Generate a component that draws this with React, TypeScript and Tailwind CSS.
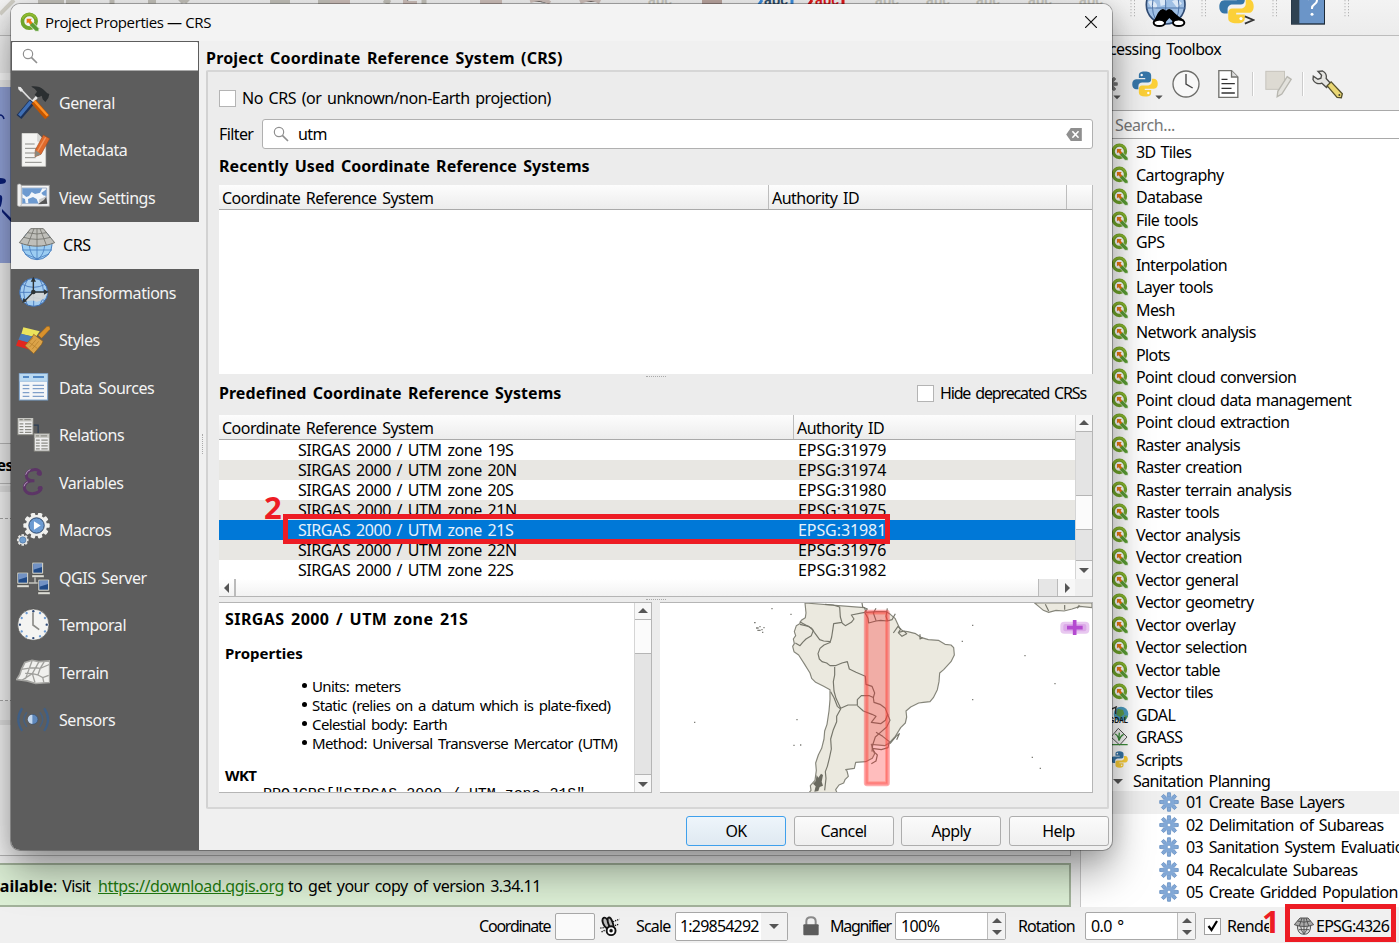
import React from "react";

const QIcon = ({ className = "" }: { className?: string }) => (
  <svg viewBox="0 0 54 54" className={className}>
    <circle cx="25" cy="25" r="18.5" fill="none" stroke="#6fa52a" strokeWidth="10" />
    <path d="M7 19a19 19 0 0 1 36 0" fill="none" stroke="#8fb82e" strokeWidth="5" />
    <path d="M27 29l8-1 16 16v8h-9L26 36z" fill="#5a9c33" stroke="#f4f7ee" strokeWidth="2" />
    <path d="M18 18h14l-3 5 5 6-6 5-6-6-4 3z" fill="#ee7913" />
  </svg>
);

const Python = ({ className = "" }: { className?: string }) => (
  <svg viewBox="0 0 110 110" className={className}>
    <path d="M54 2c-20 0-25 7-25 16v12h27v5H17C6 35 1 44 1 56s6 21 15 21h11V64c0-9 7-15 16-15h25c8 0 13-6 13-13V18C81 8 72 2 54 2z" fill="#3776a8" />
    <path d="M56 108c20 0 25-7 25-16V80H54v-5h39c11 0 16-9 16-21s-6-21-15-21H84v13c0 9-7 15-16 15H42c-8 0-13 6-13 13v18c0 10 9 16 27 16z" fill="#fcd038" />
    <circle cx="41" cy="17" r="5" fill="#fff" />
    <circle cx="69" cy="93" r="5" fill="#fff" />
  </svg>
);

const Magnifier = ({ className = "" }: { className?: string }) => (
  <svg viewBox="0 0 48 48" className={className} fill="none" stroke="#8f8f8f">
    <circle cx="18" cy="18" r="14" strokeWidth="3.5" />
    <path d="M28 28l17 17" strokeWidth="5" />
  </svg>
);

const Gear = ({ className = "", color = "#82a8d6", edge = "#5d88be" }: { className?: string; color?: string; edge?: string }) => (
  <svg viewBox="-28 -28 56 56" className={className}>
    {[0, 45, 90, 135, 180, 225, 270, 315].map((a) => (
      <path key={a} transform={`rotate(${a})`} d="M-5-15l1-11h8l1 11z" fill={color} stroke={edge} strokeWidth="2" />
    ))}
    <circle r="15.5" fill={color} />
    <circle r="5" fill="#fff" stroke={edge} strokeWidth="1.5" />
  </svg>
);

const Tri = ({ dir, className = "" }: { dir: "up" | "down" | "left" | "right"; className?: string }) => {
  const d = { up: "M0 7L5 2l5 5z", down: "M0 3l5 5 5-5z", left: "M7 0L2 5l5 5z", right: "M3 0l5 5-5 5z" }[dir];
  return (
    <svg viewBox="0 0 10 10" className={`block h-[10px] w-[10px] shrink-0 ${className}`} fill="#555">
      <path d={d} />
    </svg>
  );
};

const Monitor = ({ x, y }: { x: number; y: number }) => (
  <g transform={`translate(${x} ${y})`}>
    <rect width="34" height="35" rx="3" fill="#d9d9d2" stroke="#44443f" strokeWidth="1.5" />
    <rect x="4" y="4" width="26" height="27" fill="#204a87" />
    <path d="M4 4h26v10L4 22z" fill="#7292c4" />
    <rect x="0" y="38" width="36" height="7" fill="#dcdcd5" stroke="#55554f" />
  </g>
);

const Sheet = ({ x, y }: { x: number; y: number }) => (
  <g transform={`translate(${x} ${y})`}>
    <rect width="47" height="54" fill="#eee" stroke="#8d8d86" strokeWidth="3" />
    <rect x="1" y="1" width="45" height="12" fill="#c8c8c3" />
    <path d="M5 7h10M20 7h20M5 20h12M5 29h12M5 38h12M5 47h12M22 20h20M22 29h20M22 38h20M22 47h20" stroke="#8c8c85" strokeWidth="4" />
  </g>
);

const ICON = "block h-[34px] w-[34px] shrink-0";

const icons: Record<string, React.ReactNode> = {
  General: (
    <svg viewBox="48 257 102 102" className={ICON}>
      <path d="M60 264l36 38" stroke="#ddd" strokeWidth="5" />
      <path d="M54 259l8 1 7 9-6 6-8-8z" fill="#e8e8e8" />
      <path d="M97 303L57 350" stroke="#1c3158" strokeWidth="19" strokeLinecap="butt" />
      <path d="M93 304L58 346" stroke="#3f6fb5" strokeWidth="10" />
      <path d="M113 287l-15 17" stroke="#e6e6e6" strokeWidth="8" />
      <path d="M95 258c16-1 28 2 36 10l11 11 6 2-3 12-9 12-8-8-3-11-12 6-9-9 7-9c-4-7-8-10-16-14z" fill="#2b2f31" />
      <path d="M101 304l41 47" stroke="#c35500" strokeWidth="17" />
      <path d="M103 302l40 44" stroke="#ff9227" strokeWidth="7" />
    </svg>
  ),
  Metadata: (
    <svg viewBox="48 400 102 102" className={ICON}>
      <path d="M66 401h46l25 25v74H66z" fill="#f4f4f2" stroke="#d4d4d0" strokeWidth="2" />
      <path d="M113 401v24h23z" fill="#d8d8d4" stroke="#aaa" />
      <path d="M75 433h29M75 446h40M75 460h30M75 474h32M75 488h50" stroke="#8c8c88" strokeWidth="3" />
      <path d="M130 406l19 11-26 47-18 7 1-20z" fill="#e06a2c" stroke="#a34b1d" strokeWidth="2" />
      <path d="M106 451l17 13-18 7z" fill="#8a8a80" />
      <path d="M137 413l-24 42" stroke="#f0955f" strokeWidth="4" />
    </svg>
  ),
  "View Settings": (
    <svg viewBox="48 542 102 102" className={ICON}>
      <path d="M58 555h90v63H58z" fill="#f5f5f5" stroke="#9a9a9a" strokeWidth="3" />
      <path d="M66 563h74v47H66z" fill="#f2f6fb" stroke="#7e94b5" strokeWidth="2" />
      <path d="M67 564h60l-7 13-15 4-10-6-8 12-8 3-12-10zM67 592l8 4 2 13H67zM85 609l-1-13 15-6 11 6 5 13zM133 571l6-4v20l-10-2-5-7z" fill="#6d9ad0" />
      <path d="M115 612l23-24 4 22z" fill="#555" />
      <path d="M140 588l-8 11-16 10 2-12z" fill="#c9c9c9" />
      <rect x="52" y="551" width="12" height="67" rx="5" fill="#f0f0f0" stroke="#a5a5a5" strokeWidth="2" />
    </svg>
  ),
  CRS: (
    <svg viewBox="54 679 114 114" className="block h-[38px] w-[38px] shrink-0">
      <circle cx="111" cy="735" r="45" fill="#9ccdf2" stroke="#4a80c0" strokeWidth="3" />
      <path d="M66 751h90M88 731c0 22 8 40 23 49 15-9 23-27 23-49M111 730v50M75 763l36 14 36-14" fill="none" stroke="#4a80c0" strokeWidth="2.5" />
      <path d="M92 687h38l34 42c-34 14-72 14-106 0z" fill="#bfbfba" stroke="#73736e" strokeWidth="3" />
      <path d="M102 687l-19 49M120 687l19 49M111 687v52M82 699q29 8 58 0M71 713q40 12 80 0" fill="none" stroke="#73736e" strokeWidth="2.5" />
    </svg>
  ),
  Transformations: (
    <svg viewBox="48 32 102 102" className={ICON}>
      <circle cx="101" cy="81" r="42" fill="#a4cdf0" stroke="#3b6db2" strokeWidth="3" />
      <path d="M59 81h84M67 57q34 18 68 0M67 106q34-18 68 0M101 39v84M83 42q-24 38 0 78M119 42q24 38 0 78" fill="none" stroke="#4274b8" strokeWidth="2.5" />
      <path d="M71 112l28-31h45q-10 26-34 28-20-8-38 3z" fill="#d6d6d3" opacity=".9" />
      <path d="M100 80V44M100 80h40M100 80l-28 29" stroke="#2e3436" strokeWidth="4" />
      <path d="M100 34l-8 15h16zM146 80l-14-8v16zM67 113l3-15 11 10z" fill="#2e3436" />
      <circle cx="100" cy="80" r="7" fill="#2e3436" />
    </svg>
  ),
  Styles: (
    <svg viewBox="48 175 102 102" className={ICON}>
      <path d="M70 188l49 12-12 18-43-10z" fill="#ece35c" />
      <path d="M63 207l44 11-12 19-40-11z" fill="#4d7db8" />
      <path d="M55 225l43 12-8 18-42-12z" fill="#e3261f" />
      <path d="M148 185l3 8-26 28-11-9 27-27z" fill="#d9912c" stroke="#8c5a14" strokeWidth="1.5" />
      <path d="M101 209l28 21-4 9-24 28-26-24 22-26z" fill="#dba349" stroke="#8a5c1a" strokeWidth="2" />
      <path d="M99 219l-17 20M108 225l-19 22M116 230l-20 24M86 232l27 20" stroke="#b27b28" strokeWidth="2" />
    </svg>
  ),
  "Data Sources": (
    <svg viewBox="48 317 102 102" className={ICON}>
      <rect x="58" y="325" width="85" height="79" fill="#f4f6f8" stroke="#7da5cf" strokeWidth="3" />
      <rect x="59" y="326" width="83" height="22" fill="#b9d9f1" />
      <path d="M69 335h18M99 335h33" stroke="#5289c5" strokeWidth="6" />
      <path d="M68 360h20M68 370h20M68 382h20M68 393h20M98 360h34M98 370h34M98 382h34M98 393h34" stroke="#7f9fc9" strokeWidth="3.5" />
      <path d="M59 348h84" stroke="#8bb0d6" strokeWidth="2" />
    </svg>
  ),
  Relations: (
    <svg viewBox="48 460 102 106" className={ICON}>
      <path d="M100 482h15v27" stroke="#2d3f55" strokeWidth="4" fill="none" />
      <Sheet x={52} y={458} />
      <Sheet x={103} y={509} />
    </svg>
  ),
  Variables: (
    <svg viewBox="48 602 102 102" className={ICON}>
      <path d="M121 627c2-11-10-15-20-14-13 1-22 8-22 18s9 16 24 15c-19-1-30 8-30 20 0 14 12 20 26 19 13-1 25-8 24-18" fill="none" stroke="#5c3566" strokeWidth="9" strokeLinecap="round" />
      <circle cx="117" cy="624" r="7" fill="#5c3566" />
      <circle cx="120" cy="669" r="7" fill="#5c3566" />
      <path d="M77 628q3-12 14-15M72 663q2-10 11-13" fill="none" stroke="#b39abb" strokeWidth="3" />
    </svg>
  ),
  Macros: (
    <svg viewBox="48 40 102 106" className={ICON}>
      <g transform="translate(110 79)">
        {[0, 36, 72, 108, 144, 180, 216, 252, 288, 324].map((a) => (
          <rect key={a} x="-7" y="-41" width="14" height="14" rx="3" fill="#f0f0ee" transform={`rotate(${a + 18})`} />
        ))}
        <circle r="33" fill="#f0f0ee" />
        <circle r="24" fill="#6c9bd2" stroke="#2c4568" strokeWidth="3" />
        <path d="M-8-13L13 0l-21 13z" fill="#fff" />
      </g>
      <g transform="translate(67 124)">
        {[0, 45, 90, 135, 180, 225, 270, 315].map((a) => (
          <rect key={a} x="-4" y="-18" width="8" height="8" fill="#e6e6e4" transform={`rotate(${a})`} />
        ))}
        <circle r="14" fill="#e6e6e4" />
        <circle r="10" fill="#729fcf" stroke="#3b5f8c" strokeWidth="1.5" />
      </g>
    </svg>
  ),
  "QGIS Server": (
    <svg viewBox="48 182 102 102" className={ICON}>
      <path d="M105 228v20M86 248h32" stroke="#c4c4bd" strokeWidth="4" />
      <Monitor x={96} y={186} />
      <Monitor x={51} y={216} />
      <Monitor x={114} y={237} />
    </svg>
  ),
  Temporal: (
    <svg viewBox="48 325 104 104" className={ICON}>
      <circle cx="101" cy="376" r="48" fill="#f4f4f2" stroke="#4a4a48" strokeWidth="2" />
      {[0, 30, 60, 90, 120, 150, 180, 210, 240, 270, 300, 330].map((a) => (
        <circle key={a} cx="101" cy="335" r="3.6" fill={a % 90 ? "#6b9ad2" : "#2e4a78"} transform={`rotate(${a} 101 376)`} />
      ))}
      <path d="M100 339v38l19 14" fill="none" stroke="#8a8a86" strokeWidth="5" />
    </svg>
  ),
  Terrain: (
    <svg viewBox="48 467 104 104" className={ICON}>
      <path d="M75 487l22-7 21 4 33-2v66l-43 3-26-8-32-4q12-15 15-32z" fill="#f0f0ee" stroke="#a5a5a2" strokeWidth="5" />
      <path d="M97 482l-8 22-25 4M118 485l-10 18-19 1-12 33M150 493l-28 12-14-2-10 18 8 27M122 505l-7 20-17-4-22-1M115 525l15 8 18-7M130 533l3 15M122 505l12-20M98 521l-32 20" fill="none" stroke="#a0a09d" strokeWidth="4" />
    </svg>
  ),
  Sensors: (
    <svg viewBox="48 610 104 104" className={ICON} fill="none">
      <path d="M67 626q-24 34 0 69M134 626q24 34 0 69" stroke="#3f5f86" strokeWidth="7" />
      <path d="M81 638q-17 22 0 45M121 638q17 22 0 45" stroke="#46607f" strokeWidth="5" />
      <circle cx="100" cy="660" r="15" fill="#5f88bb" stroke="#37506f" strokeWidth="2" />
      <path d="M98 646a14 14 0 0 0 0 28z" fill="#c3d7ee" />
    </svg>
  ),
};

const toolGroups = [
  "3D Tiles", "Cartography", "Database", "File tools", "GPS", "Interpolation", "Layer tools", "Mesh",
  "Network analysis", "Plots", "Point cloud conversion", "Point cloud data management",
  "Point cloud extraction", "Raster analysis", "Raster creation", "Raster terrain analysis", "Raster tools",
  "Vector analysis", "Vector creation", "Vector general", "Vector geometry", "Vector overlay",
  "Vector selection", "Vector table", "Vector tiles",
];

const planning = [
  "01 Create Base Layers", "02 Delimitation of Subareas", "03 Sanitation System Evaluation",
  "04 Recalculate Subareas", "05 Create Gridded Population",
];

const crsRows = [
  ["19S", "31979"], ["20N", "31974"], ["20S", "31980"], ["21N", "31975"], ["21S", "31981"], ["22N", "31976"], ["22S", "31982"],
];

const Handle = ({ className = "" }: { className?: string }) => (
  <svg viewBox="0 0 6 18" className={`h-[18px] w-[6px] shrink-0 ${className}`} stroke="#b5b5b5" strokeDasharray="1.3 1.7">
    <path d="M1 0v18M4.5 0v18" />
  </svg>
);

const MainToolbar = () => (
  <div className="flex h-[36px] shrink-0 items-start overflow-hidden border-b border-[#bcbcbc] bg-gradient-to-b from-[#f3f3f3] to-[#ececec]">
    <svg viewBox="0 0 1120 36" className="h-[36px] w-[1120px] shrink-0">
      <path d="M0 14L14 0" stroke="#d1cfc6" strokeWidth="4" />
      <path d="M38 1h26M66 2h14M112 0v4M148 1h8M180 2q4-4 8 0M270 1h20M384 0l6 3M424 0v5M318 2h18" stroke="#c4c2bb" strokeWidth="5" />
      <path d="M330 2h20M405 0v3h12M480 2h22M530 1q12-4 20 2M580 2q12-5 20 0" stroke="#cfc0bb" strokeWidth="4" />
      <path d="M702 2h20" stroke="#bba6a0" strokeWidth="4" />
      <g fontFamily="Liberation Sans, sans-serif" fontSize="14" fontWeight="700" letterSpacing="0" wordSpacing="0">
        <text x="648" y="5" fill="#c9c8c0">abc</text>
        <text x="764" y="5" fill="#30506e">abc</text>
        <text x="815" y="5" fill="#e2161a">abc</text>
        <text x="875" y="5" fill="#c9c8c0">abc</text>
        <text x="926" y="5" fill="#c9c8c0">abc</text>
        <text x="976" y="5" fill="#c9c8c0">abc</text>
        <text x="1028" y="5" fill="#c9c8c0">abc</text>
        <text x="1079" y="5" fill="#c9c8c0">abc</text>
      </g>
      <path d="M762 0l-4 6M792 0v6" stroke="#3b8ee0" strokeWidth="3" />
      <path d="M812 0l-4 6M843 0v6" stroke="#e2161a" strokeWidth="3" />
    </svg>
    <Handle className="ml-[10px]" />
    <svg viewBox="250 0 132 90" className="ml-[8px] h-[30px] w-[44px] shrink-0">
      <circle cx="315" cy="14" r="58" fill="#9fbfe4" stroke="#2f4a72" strokeWidth="5" />
      <path d="M262 6q14-10 24 4t-10 18zM334 4q16-10 30 6l-14 14zM296-6h24l-6 20-14 4z" fill="#dce8f6" />
      <path d="M258 24h116M315-40V60M285-30q-20 50 0 90M345-30q20 50 0 90" stroke="#4e74a8" strokeWidth="3" fill="none" />
      <path d="M278 66L292 38Q304 20 316 32 328 20 341 38L373 66 340 68 326 54 312 70z" fill="#000" />
      <ellipse cx="296" cy="68" rx="17" ry="10" fill="#fff" stroke="#000" strokeWidth="6" />
      <ellipse cx="354" cy="68" rx="17" ry="10" fill="#fff" stroke="#000" strokeWidth="6" />
      <path d="M282 60q14-14 30-2v10q-14-12-30-2zM338 60q16-14 32 0v6q-16-10-32 0z" fill="#000" />
    </svg>
    <Handle className="ml-[13px]" />
    <div className="relative ml-[12px] h-[30px] w-[44px] shrink-0 overflow-hidden">
      <Python className="absolute -top-[11px] left-0 h-[35px] w-[35px]" />
      <svg viewBox="0 0 30 28" className="absolute left-[25px] top-[15px] h-[10px] w-[11px]">
        <path d="M2 4l24 10L2 24" fill="none" stroke="#333" strokeWidth="5" />
      </svg>
    </div>
    <Handle className="ml-[9px]" />
    <svg viewBox="0 0 102 75" className="ml-[13px] h-[25px] w-[34px] shrink-0">
      <rect x="1" y="-10" width="100" height="82" fill="#6b95c8" stroke="#1d2a38" strokeWidth="4" />
      <rect x="1" y="-10" width="24" height="82" fill="#2f4252" />
      <path d="M50 0q2-14 14-14t14 14q0 8-8 13t-7 14" fill="none" stroke="#fff" strokeWidth="6" />
      <circle cx="63" cy="43" r="4.500" fill="#fff" />
    </svg>
    <Handle className="ml-[19px]" />
  </div>
);

const Toolbox = () => (
  <div className="ml-[9px] flex w-[319px] shrink-0 flex-col bg-[#f0f0f0]">
    <div className="flex h-[26px] w-[141px] justify-end whitespace-nowrap leading-[26px]">Processing Toolbox</div>
    <div className="flex h-[44px] items-center pl-[20px]">
      <Gear className="h-[18px] w-[18px]" color="#777" edge="#666" />
      <Tri dir="down" className="-ml-[6px] mt-[26px] scale-75" />
      <Python className="ml-[10px] h-[26px] w-[26px]" />
      <Tri dir="down" className="-ml-[4px] mt-[26px] scale-75" />
      <svg viewBox="0 0 84 84" className="ml-[8px] h-[28px] w-[28px]" fill="none" stroke="#6d6d6a">
        <circle cx="42" cy="42" r="39" strokeWidth="4" fill="#f8f8f8" />
        <path d="M42 12v30l20 12" strokeWidth="4" stroke="#444" />
      </svg>
      <svg viewBox="0 0 62 84" className="ml-[18px] h-[28px] w-[21px]" fill="#fff" stroke="#71716d" strokeWidth="4">
        <path d="M2 2h38l19 19v61H2z" />
        <path d="M40 2v19h19" fill="#ddd" />
        <path d="M10 28h18M10 41h40M10 55h30M10 69h40" stroke="#333" />
      </svg>
      <div className="ml-[13px] h-[24px] w-[2px] border-l border-[#ccc] bg-white" />
      <svg viewBox="0 0 80 84" className="ml-[11px] h-[28px] w-[27px]">
        <rect x="2" y="4" width="56" height="54" fill="#dddad2" stroke="#c6c4bc" strokeWidth="3" />
        <path d="M66 20l12 8-28 44-14 8 2-16z" fill="#e3e2dd" stroke="#b8b7b0" strokeWidth="4" />
      </svg>
      <div className="ml-[10px] h-[24px] w-[2px] border-l border-[#ccc] bg-white" />
      <svg viewBox="0 0 94 86" className="ml-[8px] h-[29px] w-[31px]">
        <path d="M18 3l14-1c10 5 13 14 11 23l13 14-12 13-14-13C18 43 7 38 3 28l1-10 14 9 9-3 2-9z" fill="#e4e4e1" stroke="#4b4b48" strokeWidth="4" />
        <path d="M46 47l12-12 34 36-3 12-13-1z" fill="#ead774" stroke="#55502c" strokeWidth="4" />
        <circle cx="83" cy="75" r="3" fill="#443" />
      </svg>
    </div>
    <div className="mt-[4px] h-[29px] border-y border-[#a9a9a9] bg-white pl-[35px] leading-[28px] tracking-[-0.4px] text-[#777]">Search...</div>
    <div className="flex flex-1 flex-col overflow-hidden border-l border-[#c8c8c8] bg-white pt-[2px]">
      {toolGroups.map((t) => (
        <div key={t} className="flex h-[22.5px] shrink-0 items-center pl-[30px]">
          <QIcon className="h-[18px] w-[18px]" />
          <span className="ml-[7px] whitespace-nowrap [word-spacing:1.2px]">{t}</span>
        </div>
      ))}
      <div className="flex h-[22.5px] shrink-0 items-center pl-[30px]">
        <svg viewBox="0 0 54 54" className="h-[18px] w-[18px]">
          <circle cx="30" cy="24" r="22" fill="#4a9cc0" />
          <path d="M20 8l16 4 4 12-12 10-12-8zM40 28l10 2-6 12z" fill="#5d9b4a" />
          <text x="-6" y="52" fontFamily="Liberation Sans, sans-serif" fontSize="26" fontWeight="700" textLength="56" lengthAdjust="spacingAndGlyphs" fill="#111">GDAL</text>
          <path d="M0 10l18-8M14 4v20" stroke="#333" strokeWidth="4" />
        </svg>
        <span className="ml-[7px]">GDAL</span>
      </div>
      <div className="flex h-[22.5px] shrink-0 items-center pl-[30px]">
        <svg viewBox="0 0 54 54" className="h-[18px] w-[18px]">
          <path d="M22 1l26 26-22 24L0 27z" fill="#f4f4f4" stroke="#555" strokeWidth="3" />
          <path d="M24 38q-2-16-12-20M24 38q0-16 1-24M24 38q4-14 14-19M2 50h48" stroke="#3c8c3a" strokeWidth="4" fill="none" />
        </svg>
        <span className="ml-[7px]">GRASS</span>
      </div>
      <div className="flex h-[22.5px] shrink-0 items-center pl-[30px]">
        <Python className="h-[17px] w-[17px]" />
        <span className="ml-[8px]">Scripts</span>
      </div>
      <div className="flex h-[20px] shrink-0 items-center pl-[32px]">
        <Tri dir="down" />
        <span className="ml-[10px]">Sanitation Planning</span>
      </div>
      {planning.map((t, i) => (
        <div key={t} className={`flex h-[22.5px] shrink-0 items-center pl-[78px] ${i === 0 ? "bg-[#efefef]" : ""}`}>
          <Gear className="h-[20px] w-[20px] shrink-0" />
          <span className="ml-[7px] whitespace-nowrap">{t}</span>
        </div>
      ))}
    </div>
  </div>
);

const Canvas = () => (
  <div className="flex w-[1071px] shrink-0 flex-col">
    <div className="h-[37px] bg-[#f0f0f0]" />
    <div className="h-[7px] bg-white" />
    <div className="h-[7px] bg-[#eee]" />
    <svg viewBox="0 0 12 176" className="block h-[176px] w-[12px] shrink-0">
      <path d="M0 0h12v176H0z" fill="#94a5dc" />
      <path d="M0 28q3 0 4 4" stroke="#0b1f7a" strokeWidth="1.500" fill="none" />
      <path d="M0 91q6 0 6 3t-6 3zM0 108q3 0 2 6t-2 6zM2 122l9 9v4l-9-10z" fill="#0b1f7a" />
    </svg>
    <div className="h-[180px] bg-[#f3f3f3]" />
    <div className="h-[41px] w-full border-y border-[#bbb] bg-[#f0f0f0]">
      <div className="flex w-[13px] justify-end overflow-hidden text-[16px] font-bold leading-[43px]">Templates</div>
    </div>
    <div className="mt-[2px] h-[6px] bg-[#e4e4e4]" />
    <div className="h-[27px] border-b border-dashed border-[#aaa] bg-[#f8f8f8]" />
    <div className="h-[182px] border-b border-dashed border-[#aaa] bg-[#f8f8f8]" />
    <div className="mt-[19px] h-[5px] bg-[#e2e2e2]" />
    <div className="flex-1 border-b border-r border-[#b5b5b5] bg-[#f5f5f5]" />
    <div className="mt-[7px] flex h-[44px] shrink-0 items-center overflow-hidden whitespace-pre border-2 border-l-0 border-[#a3b39b] bg-[#dcefd5] pt-[2px]">
      <span className="flex w-[53px] justify-end font-bold tracking-[0px]">available</span>
      <span className="w-[45px]">: Visit </span>
      <span className="w-[190px] text-[#1f7a0f]"><span className="tracking-[-0.38px] underline">https://download.qgis.org</span></span>
      <span className="tracking-[-0.52px]">to get your copy of version 3.34.11</span>
    </div>
  </div>
);

const Spin = ({ text, className = "" }: { text: string; className?: string }) => (
  <div className={`flex h-[28px] items-center rounded-[2px] border border-[#a8a8a8] bg-white ${className}`}>
    <span className="flex-1 pl-[5px]">{text}</span>
    <div className="flex h-full w-[18px] flex-col items-center justify-center gap-[1px] border-l border-[#bbb] bg-[#f2f2f2]">
      <Tri dir="up" />
      <Tri dir="down" />
    </div>
  </div>
);

const StatusBar = () => (
  <div className="flex h-[36px] shrink-0 items-center bg-[#f0f0f0] pl-[479px] pt-[2px]">
    <span className="w-[76px] tracking-[-1.200px]">Coordinate</span>
    <div className="h-[27px] w-[40px] rounded-[2px] border border-[#a8a8a8] bg-[#fafafa]" />
    <svg viewBox="0 0 66 66" className="ml-[4px] h-[21px] w-[21px]" fill="none" stroke="#111">
      <ellipse cx="22" cy="22" rx="9" ry="18" transform="rotate(-25 22 22)" strokeWidth="6" fill="#bbb" />
      <ellipse cx="36" cy="22" rx="7" ry="18" transform="rotate(-20 36 22)" strokeWidth="6" fill="#bbb" />
      <circle cx="38" cy="46" r="14" strokeWidth="6" fill="#fff" />
      <circle cx="38" cy="46" r="5" fill="#111" />
      <path d="M44 18l20-8M4 38l14-2M8 50l12-6M50 30l12-4" strokeWidth="4" strokeDasharray="4 3" />
    </svg>
    <span className="ml-[16px] w-[39px] tracking-[-0.8px]">Scale</span>
    <div className="flex h-[29px] w-[113px] items-center rounded-[2px] border border-[#a8a8a8] bg-white">
      <span className="flex-1 whitespace-nowrap pl-[4px] tracking-[-0.8px]">1:29854292</span>
      <div className="flex h-full w-[26px] items-center justify-center bg-[#f2f2f2]"><Tri dir="down" /></div>
    </div>
    <svg viewBox="0 0 48 60" className="ml-[15px] h-[20px] w-[16px]">
      <path d="M10 28V16q0-12 14-12t14 12v12" fill="none" stroke="#8a8a8a" strokeWidth="6" />
      <rect x="1" y="25" width="46" height="33" rx="3" fill="#5c5c5c" />
    </svg>
    <span className="ml-[11px] w-[65px] tracking-[-1.300px]">Magnifier</span>
    <Spin text="100%" className="w-[111px]" />
    <span className="ml-[12px] w-[67px] tracking-[-0.9px]">Rotation</span>
    <Spin text="0.0 °" className="w-[111px]" />
    <div className="ml-[8px] flex h-[17px] w-[17px] items-center justify-center border border-[#a0a0a0] bg-white">
      <svg viewBox="0 0 12 12" className="h-[12px] w-[12px]"><path d="M1.500 6l3 4L10 1" fill="none" stroke="#000" strokeWidth="2.200" /></svg>
    </div>
    <span className="ml-[6px] w-[67px]"><span className="block w-[42px] overflow-hidden">Render</span></span>
    <svg viewBox="0 0 60 54" className="h-[18px] w-[20px]" fill="none" stroke="#555" strokeWidth="3">
      <path d="M10 26q0 26 20 26t20-26z" fill="#ddd" />
      <path d="M18 3h24l17 20q-29 11-58 0z" fill="#aaa" />
      <path d="M24 3l-8 24M36 3l8 24M30 3v48M10 12q20 7 40 0M14 38h32M20 28q2 16 10 23M40 28q-2 16-10 23" />
    </svg>
    <span className="ml-[2px] whitespace-nowrap tracking-[-0.75px]">EPSG:4326</span>
  </div>
);

const Check = () => <div className="h-[17px] w-[17px] shrink-0 border border-[#b4b4b4] bg-white" />;

const DotsH = () => (
  <div className="flex justify-center">
    <div className="h-[1px] w-[20px] border-t border-dotted border-[#aaa]" />
  </div>
);

const Head = ({ children, className = "" }: { children?: React.ReactNode; className?: string }) => (
  <div className={`flex h-[24px] shrink-0 items-center bg-gradient-to-b from-[#fdfdfd] to-[#ececec] pl-[3px] pt-[2px] tracking-[-0.52px] ${className}`}>{children}</div>
);

const BTN = "flex w-full shrink-0 items-center justify-center bg-[#f7f7f7]";

const SouthAmerica = () => (
  <svg viewBox="30 24 1296 567" className="block h-full w-full">
    <path d="M465 24l3 30-2 14-12 8-5 10-10 6-6 18 4 12-7 10 3 14-5 8 4 16 14 10 18 28 16 26 5 16 12 12 24 12 19 10v30l-3 34-6 40-7 20-2 24-7 28-10 20-8 24 2 22-4 30-14 16 2 14-10 12h90l-6-14 10-14 14-6 4-10 10-10-4-16-4-4 26-4 4-18 30-2 20-10 7-14-6-14-4-14 40 4 14-8 18-20 16-26 14-14 4-18-2-18 14-12 24-12 14-2 20-2 10-12 12-24 5-24 2-26 12-10 22-24 10-20-2-22-8-8-18-2-20-12-30-2-20-6-18-12-24-6-14-2-10-8-14-30-14-12-12-8h-30l-30 2-6-14z" fill="#ebe9df" stroke="#85857a" strokeWidth="3.500" strokeLinejoin="round" />
    <path d="M1154 24l12 10 14 12 16 6 22-6 24 2 24-6 24-8 36 4V24z" fill="#ebe9df" stroke="#85857a" strokeWidth="3.500" />
    <g fill="none" stroke="#76766b" strokeWidth="3.500" strokeLinejoin="round">
      <path d="M525 28l24 2 20 6 2 30 5 16-25 4-2 14-4 26-4 14-20-2-12-4-16-22-8-12-36-20" />
      <path d="M450 88l26 6 14 12-6 16-16 10-10 10-8 10-14-8" />
      <path d="M576 84l10 8 18-10 8-10-8-12 40-8 8-10-14-6-2-12" />
      <path d="M644 52l10 18 2 14 22-6 14-2 20 2 14-4 10-18M678 40l-8 14 8 22M712 40l-4 24 4 12" />
      <path d="M542 142l-20 8-12 10-6 16 4 16 8 8 14 4 10 8h16l20-8 16-4 6 22 20 10 28 12 2 24 18 6 8 20-4 14 2 14 18 6 16 12 6 16 8 20-10 20-16 14-18 16-8 24-2 20" />
      <path d="M554 216v24l-4 20 2 28 6 22 14 30 22-10h28v-16l12-12h24l14 6M622 332l18 16 26 10 12 6-14 18 28 4 14-10 8-20M678 412l20 12 20 16-4 18-20 6-28-4M668 462l6 10 8 8-4 18-14 8" />
      <path d="M542 290l10 18 10 26 10 8-12 22v16l-10 24-8 28 2 30-6 28-6 24-6 16 2 20-4 36" />
      <path d="M730 114l14-20 8 8-6 10 16-4 8 8-14 8-12-12M810 118v14l8-4M720 446l18-22 10-8-8 18M1186 28l10 20M1244 30v14M1282 40l6-10" />
    </g>
    <path d="M500 540l5 8 8-12 6 4-4 20 4 12-10 4-4 12-12 2 4-16-8-8 8-8z" fill="#6a6a60" />
    <path d="M318 99h8M328 95h4M322 106h10M334 104h4M336 112h4M340 98h4M364 41h4M421 58h4M312 83h5M966 91h4M935 139h4M1123 182h4M1213 266h4M132 382h4M439 374h4M430 451h4M450 450h4M966 314h4M1145 487h4M1169 520h4" stroke="#7e7e78" strokeWidth="4" fill="none" />
    <rect x="646" y="49" width="69" height="520" fill="#ff1c1c" fillOpacity=".29" />
    <rect x="647" y="50" width="67" height="518" rx="4" fill="none" stroke="#ff3c3c" strokeOpacity=".42" strokeWidth="11" />
    <rect x="653" y="56" width="55" height="506" fill="none" stroke="#f43" strokeOpacity=".3" strokeWidth="6" />
    <rect x="1231" y="80" width="87" height="36" rx="12" fill="#e8c8f0" />
    <rect x="1240" y="87" width="69" height="22" rx="6" fill="#dba9e8" />
    <path d="M1251 98h47M1274 75v45" stroke="#b44ad0" strokeWidth="11" />
  </svg>
);

const Dialog = () => (
  <div className="absolute left-[11px] top-[4px] flex h-[846px] w-[1101px] flex-col overflow-hidden rounded-[9px] bg-[#f0f0f0] shadow-[0_0_0_1px_rgba(0,0,0,0.3),0_2px_22px_rgba(0,0,0,0.14),0_22px_40px_rgba(0,0,0,0.36)]">
    <div className="flex h-[37px] shrink-0 items-center bg-[#f3f3f3] pb-[2px] pl-[9px]">
      <QIcon className="h-[20px] w-[20px]" />
      <span className="ml-[5px] font-['Open_Sans','Noto_Sans',sans-serif] text-[15px] tracking-[-0.38px] [word-spacing:0px]">Project Properties — CRS</span>
      <svg viewBox="0 0 12 12" className="ml-auto mr-[15px] h-[12px] w-[12px]" stroke="#111" strokeWidth="1.200"><path d="M0 0l12 12M12 0L0 12" /></svg>
    </div>
    <div className="flex min-h-0 flex-1">
      <div className="flex w-[188px] shrink-0 flex-col bg-[#5d5d5d]">
        <div className="mx-[1px] mt-[1px] flex h-[29px] shrink-0 items-center rounded-[1px] border-b border-[#aaa] bg-white pl-[10px]">
          <Magnifier className="h-[16px] w-[16px]" />
        </div>
        <div className="mt-[8px]">
          {Object.keys(icons).map((n) => (
            <div
              key={n}
              className={`flex h-[47.5px] items-center tracking-[-0.45px] ${n === "CRS" ? "gap-[7px] bg-[#f0f0f0] pl-[7px] text-black" : "gap-[9px] pl-[5px] text-[#f4f4f4]"}`}
            >
              {icons[n]}
              <span className="whitespace-nowrap">{n}</span>
            </div>
          ))}
        </div>
      </div>
      <div className="flex w-[7px] shrink-0 items-center justify-center pb-[1px]">
        <div className="mb-[2px] h-[20px] w-[1px] border-l border-dotted border-[#aaa]" />
      </div>
      <div className="flex w-[903px] flex-col">
        <div className="h-[29px] shrink-0 font-bold leading-[34px]"><span className="tracking-[0.2px]">Project Coordinate Reference System (CRS)</span></div>
        <div className="flex h-[739px] shrink-0 flex-col rounded-[2px] border-2 border-[#d6d6d6] border-l-[#d2d2d2] bg-[#ececec] pl-[11px] pr-[14px]">
          <div className="mt-[16px] flex h-[20px] items-center">
            <Check />
            <span className="ml-[6px] tracking-[-0.48px]">No CRS (or unknown/non-Earth projection)</span>
          </div>
          <div className="mt-[11px] flex h-[30px] items-center">
            <span className="w-[43px]">Filter</span>
            <div className="flex h-[30px] flex-1 items-center rounded-[3px] border border-[#b0b0b0] bg-white pl-[10px]">
              <Magnifier className="h-[16px] w-[16px]" />
              <span className="ml-[9px]">utm</span>
              <svg viewBox="0 0 48 40" className="ml-auto mr-[10px] h-[13px] w-[16px]">
                <path d="M14 0h34v40H14L0 20z" fill="#8f8f8f" />
                <path d="M19 10l19 20M38 10L19 30" stroke="#fff" strokeWidth="5" />
              </svg>
            </div>
          </div>
          <div className="mt-[6px] h-[22px] shrink-0 font-bold leading-[22px]"><span className="tracking-[0.05px]">Recently Used Coordinate Reference Systems</span></div>
          <div className="mt-[8px] flex h-[189px] shrink-0 flex-col border-r border-[#bcbcbc] bg-white">
            <div className="flex border-b border-[#a9a9a9]">
              <Head className="w-[550px] border-r border-[#bdbdbd]">Coordinate Reference System</Head>
              <Head className="w-[298px] border-r border-[#bdbdbd]">Authority ID</Head>
              <Head className="flex-1" />
            </div>
          </div>
          <div className="mt-[2px] h-[3px]"><DotsH /></div>
          <div className="mt-[3px] flex h-[22px] shrink-0 items-center">
            <span className="flex-1 font-bold tracking-[0.05px]">Predefined Coordinate Reference Systems</span>
            <Check />
            <span className="ml-[6px] w-[153px] whitespace-nowrap tracking-[-1.150px]">Hide deprecated CRSs</span>
          </div>
          <div className="mt-[11px] flex h-[182px] shrink-0 flex-col border-b border-r border-[#b5b5b5] bg-white">
            <div className="flex h-[164px]">
              <div className="flex w-[856px] shrink-0 flex-col overflow-hidden">
                <div className="flex shrink-0 border-b border-[#a9a9a9]">
                  <Head className="w-[575px] border-r border-[#bdbdbd]">Coordinate Reference System</Head>
                  <Head className="flex-1">Authority ID</Head>
                </div>
                {crsRows.map(([z, id], i) => (
                  <div
                    key={z}
                    className={`flex h-[20px] shrink-0 items-center pl-[79px] leading-[20px] ${i === 4 ? "bg-[#0078d7] text-[#e8f2fb]" : i % 2 ? "bg-[#e8e7e3]" : "bg-white"}`}
                  >
                    <span className="w-[500px] tracking-[-0.43px]">SIRGAS 2000 / UTM zone {z}</span>
                    <span className="tracking-[-0.08px]">EPSG:{id}</span>
                  </div>
                ))}
              </div>
              <div className="flex flex-1 flex-col border-l border-[#d5d5d5]">
                <div className={`${BTN} h-[16px]`}><Tri dir="up" /></div>
                <div className="h-[65px] border-y border-[#b5b5b5] bg-[#e4e4e4]" />
                <div className="h-[33px] bg-[#fbfbfb]" />
                <div className="flex-1 border-y border-[#b5b5b5] bg-[#e4e4e4]" />
                <div className={`${BTN} h-[18px]`}><Tri dir="down" /></div>
              </div>
            </div>
            <div className="flex flex-1 bg-gradient-to-b from-white to-[#f2f2f2]">
              <div className="flex w-[17px] items-center justify-center border-r-2 border-[#bbb]"><Tri dir="left" /></div>
              <div className="flex-1" />
              <div className="w-[20px] border-x border-[#bbb] bg-[#e6e6e6]" />
              <div className="flex w-[17px] items-center justify-center bg-[#f7f7f7]"><Tri dir="right" /></div>
              <div className="w-[17px] bg-[#efefef]" />
            </div>
          </div>
          <div className="mt-[2px] h-[3px] shrink-0"><DotsH /></div>
          <div className="flex h-[191px] shrink-0 justify-between">
            <div className="flex w-[433px] border border-l-0 border-[#b5b5b5] bg-white">
              <div className="flex-1 overflow-hidden pl-[6px] text-[15px]">
                <div className="mt-[4px] h-[24px] text-[16px] font-bold leading-[24px] tracking-[0.42px]">SIRGAS 2000 / UTM zone 21S</div>
                <div className="mt-[11px] h-[22px] font-bold leading-[22px] tracking-[0px]">Properties</div>
                <ul className="mt-[13px] whitespace-nowrap pl-[76px] leading-[19px] tracking-[-0.6px]">
                  {["Units: meters", "Static (relies on a datum which is plate-fixed)", "Celestial body: Earth", "Method: Universal Transverse Mercator (UTM)"].map((t) => (
                    <li key={t} className="flex h-[19px] items-center">
                      <i className="mb-[2px] ml-[1px] mr-[5px] h-[5px] w-[5px] rounded-full bg-black" />
                      {t}
                    </li>
                  ))}
                </ul>
                <div className="mt-[11px] h-[22px] font-bold leading-[22px]">WKT</div>
                <div className="-mt-[1px] whitespace-pre pl-[38px] font-['Liberation_Mono',monospace] leading-[19px] tracking-[-0.05px] [word-spacing:0px]">{'PROJCRS["SIRGAS 2000 / UTM zone 21S",'}</div>
              </div>
              <div className="flex w-[17px] flex-col border-l border-[#d5d5d5]">
                <div className={`${BTN} h-[16px]`}><Tri dir="up" /></div>
                <div className="h-[34px] border-t border-[#b5b5b5] bg-[#fbfbfb]" />
                <div className="flex-1 border-y border-[#b5b5b5] bg-[#e4e4e4]" />
                <div className={`${BTN} h-[17px]`}><Tri dir="down" /></div>
              </div>
            </div>
            <div className="w-[433px] border border-l-0 border-[#b5b5b5] bg-white"><SouthAmerica /></div>
          </div>
        </div>
        <div className="mt-[7px] flex gap-[7.500px] pl-[480px]">
          {["OK", "Cancel", "Apply", "Help"].map((b) => (
            <button
              key={b}
              className={`h-[30px] w-[100px] shrink-0 rounded-[3px] border leading-[26px] ${b === "OK" ? "border-[#3fa0ec] bg-gradient-to-b from-[#eef5fb] to-[#dfe9f1]" : "border-[#adadad] bg-gradient-to-b from-[#fbfbfb] to-[#efefef]"}`}
            >
              {b}
            </button>
          ))}
        </div>
      </div>
    </div>
  </div>
);

export default function App() {
  return (
    <div className="relative flex h-[943px] w-[1399px] flex-col overflow-hidden bg-[#f0f0f0] font-['Noto_Sans',sans-serif] text-[16px] leading-[22px] tracking-[-0.6px] text-black [word-spacing:2px]">
      <MainToolbar />
      <div className="flex h-[871px] shrink-0 overflow-hidden">
        <Canvas />
        <Toolbox />
      </div>
      <StatusBar />
      <Dialog />
      <div className="absolute left-[283px] top-[514px] h-[30px] w-[607px] border-[5px] border-[#ed1c24]" />
      <div className="absolute left-[264px] top-[490px] font-['Open_Sans',sans-serif] text-[31px] font-bold leading-[34px] text-[#ed1c24]">2</div>
      <div className="absolute left-[1285px] top-[904px] h-[38px] w-[111px] border-[5px] border-[#ed1c24]" />
      <div className="absolute left-[1262px] top-[904px] font-['Open_Sans',sans-serif] text-[31px] font-bold leading-[34px] text-[#ed1c24]">1</div>
    </div>
  );
}
